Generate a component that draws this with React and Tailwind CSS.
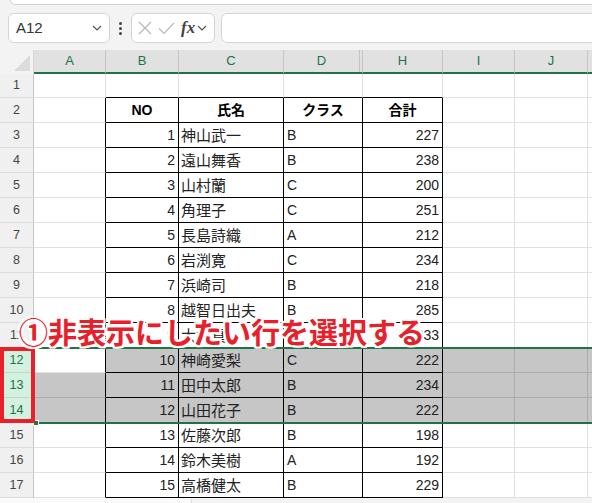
import React from 'react';

const COLS = [
  { key: 'A', w: 'w-[72px]' },
  { key: 'B', w: 'w-[73px]' },
  { key: 'C', w: 'w-[105px]' },
  { key: 'D', w: 'w-[79px]' },
  { key: 'H', w: 'w-[80px]' },
  { key: 'I', w: 'w-[72px]' },
  { key: 'J', w: 'w-[73px]' },
  { key: '', w: 'w-[72px]' },
];
const TABLE = ['B', 'C', 'D', 'H'];

const people = [
  [1, '神山武一', 'B', 227],
  [2, '遠山舞香', 'B', 238],
  [3, '山村蘭', 'C', 200],
  [4, '角理子', 'C', 251],
  [5, '長島詩織', 'A', 212],
  [6, '岩渕寛', 'C', 234],
  [7, '浜崎司', 'B', 218],
  [8, '越智日出夫', 'B', 285],
  [9, '大坪真', 'A', 233],
  [10, '神崎愛梨', 'C', 222],
  [11, '田中太郎', 'B', 234],
  [12, '山田花子', 'B', 222],
  [13, '佐藤次郎', 'B', 198],
  [14, '鈴木美樹', 'A', 192],
  [15, '高橋健太', 'B', 229],
];

const Chevron = ({ className }) => (
  <svg className={className} width="10" height="6" viewBox="0 0 10 6" fill="none">
    <path d="M1 1l4 4 4-4" stroke="#555" strokeWidth="1.2" />
  </svg>
);

function cellContent(r, key) {
  if (r === 2) {
    const head = { B: 'NO', C: '氏名', D: 'クラス', H: '合計' }[key];
    if (!head) return null;
    return <span className="w-full text-center font-bold text-[14px] text-black">{head}</span>;
  }
  if (r < 3) return null;
  const p = people[r - 3];
  if (key === 'B') return <span className="w-full text-right pr-[3px]">{p[0]}</span>;
  if (key === 'C') return <span className="pl-[2px] text-[15px] font-['Noto_Sans_CJK_JP',sans-serif]">{p[1]}</span>;
  if (key === 'D') return <span className="pl-[3px]">{p[2]}</span>;
  if (key === 'H') return <span className="w-full text-right pr-[3px]">{p[3]}</span>;
  return null;
}

function Row({ r }) {
  const selected = r >= 12 && r <= 14;
  const height = r === 1 ? 'h-[24px]' : 'h-[25px]';
  return (
    <div className={`flex ${height}`}>
      <div
        className={`w-[34px] shrink-0 flex items-center justify-center border-r border-b border-r-[#c4c4c4] text-[12.5px] ${
          selected ? 'bg-[#d3f0e0] text-[#217346] border-b-[#b8dcc6]' : 'bg-[#f0f0f0] text-[#444] border-b-[#dcdcdc]'
        }`}
      >
        {r}
      </div>
      {COLS.map((c, i) => {
        const rightBlack = (TABLE.includes(c.key) || c.key === 'A') && r >= 2;
        const bottomBlack = TABLE.includes(c.key) && r >= 1;
        const active = r === 12 && c.key === 'A';
        const shaded = selected && !active;
        const rb = rightBlack ? 'border-r-black' : shaded ? 'border-r-[#acacac]' : 'border-r-[#e1e1e1]';
        const bb = bottomBlack ? 'border-b-black' : shaded ? 'border-b-[#acacac]' : 'border-b-[#e1e1e1]';
        return (
          <div
            key={i}
            className={`${c.w} shrink-0 flex items-center border-r border-b ${rb} ${bb} ${shaded ? 'bg-[#c6c6c6]' : 'bg-white'}`}
          >
            {cellContent(r, c.key)}
          </div>
        );
      })}
    </div>
  );
}

export default function App() {
  const rows = Array.from({ length: 17 }, (_, i) => i + 1);
  return (
    <div className="relative w-[592px] h-[503px] overflow-hidden bg-[#f3f3f3] font-['Liberation_Sans','Noto_Sans_CJK_JP',sans-serif] text-[14px] text-[#222]">
      {/* top strip */}
      <div className="h-[5px] ml-[10px] bg-white border-b border-l border-[#d2d2d2] rounded-bl-[6px]" />

      {/* formula bar */}
      <div className="flex items-center h-[30px] mt-[8px]">
        <div className="ml-[8px] w-[102px] h-full bg-white border border-[#d4d4d4] rounded-[6px] flex items-center justify-between pl-[7px] pr-[7px]">
          <span className="text-[15px] text-[#333]">A12</span>
          <Chevron />
        </div>
        <div className="w-[21px] flex flex-col items-center gap-[2px]">
          <span className="w-[3px] h-[3px] rounded-full bg-[#444]" />
          <span className="w-[3px] h-[3px] rounded-full bg-[#444]" />
          <span className="w-[3px] h-[3px] rounded-full bg-[#444]" />
        </div>
        <div className="w-[84px] h-full bg-white border border-[#d4d4d4] rounded-[6px] flex items-center pl-[6px] gap-[6px]">
          <svg width="14" height="14" viewBox="0 0 14 14">
            <path d="M1 1l12 12M13 1L1 13" stroke="#b8b8b8" strokeWidth="1.2" />
          </svg>
          <svg width="17" height="13" viewBox="0 0 17 13" fill="none">
            <path d="M1 6.5l5 5L16 1" stroke="#b8b8b8" strokeWidth="1.2" />
          </svg>
          <span className="font-['Liberation_Serif',serif] italic font-bold text-[17px] text-[#444] leading-none -mt-[2px]">fx</span>
          <Chevron className="-ml-[4px]" />
        </div>
        <div className="flex-1 ml-[6px] -mr-[10px] h-full bg-white border border-[#d4d4d4] rounded-[6px]" />
      </div>

      {/* column header */}
      <div className="flex h-[24px] mt-[7px]">
        <div className="w-[34px] shrink-0 bg-[#f3f3f3] border-r border-[#d6d6d6] flex items-end justify-end pr-[3px] pb-[3px]">
          <svg width="16" height="16" viewBox="0 0 16 16">
            <path d="M16 0L16 16L0 16Z" fill="#dcdcdc" />
          </svg>
        </div>
        {COLS.map((c, i) => (
          <div
            key={i}
            className={`${c.w} shrink-0 flex bg-[#e1e1e1] border-r border-r-[#c4c4c4] border-b-2 border-b-[#217346] text-[13px] text-[#217346]`}
          >
            <span className="flex-1 flex items-center justify-center">{c.key}</span>
            {c.key === 'D' && <span className="w-[3px] border-l border-[#c4c4c4]" />}
          </div>
        ))}
      </div>

      {/* grid */}
      {rows.map((r) => (
        <Row key={r} r={r} />
      ))}

      {/* sheet tabs edge */}
      <div className="h-[5px] flex">
        <div className="w-[192px] bg-[#fafafa] border-r border-[#dadada] rounded-tr-[4px]" />
      </div>

      {/* selection border */}
      <div className="absolute left-[34px] top-[347px] right-0 h-[77px] border-y-2 border-[#217346] pointer-events-none" />
      <div className="absolute left-[33px] top-[420px] w-[6px] h-[6px] bg-[#217346] border border-white" />

      {/* red annotation box */}
      <div className="absolute left-0 top-[347px] w-[35px] h-[76px] border-[4px] border-[#e8202a]" />

      {/* annotation text */}
      <div className="absolute left-[19px] top-[317px] whitespace-nowrap font-['Noto_Sans_CJK_JP',sans-serif] font-bold text-[29px] leading-[29px] text-[#e8202a] [text-shadow:-2px_-2px_0_#fff,2px_-2px_0_#fff,-2px_2px_0_#fff,2px_2px_0_#fff,0_-2px_0_#fff,0_2px_0_#fff,-2px_0_0_#fff,2px_0_0_#fff]">
        ①非表示にしたい行を選択する
      </div>
    </div>
  );
}
